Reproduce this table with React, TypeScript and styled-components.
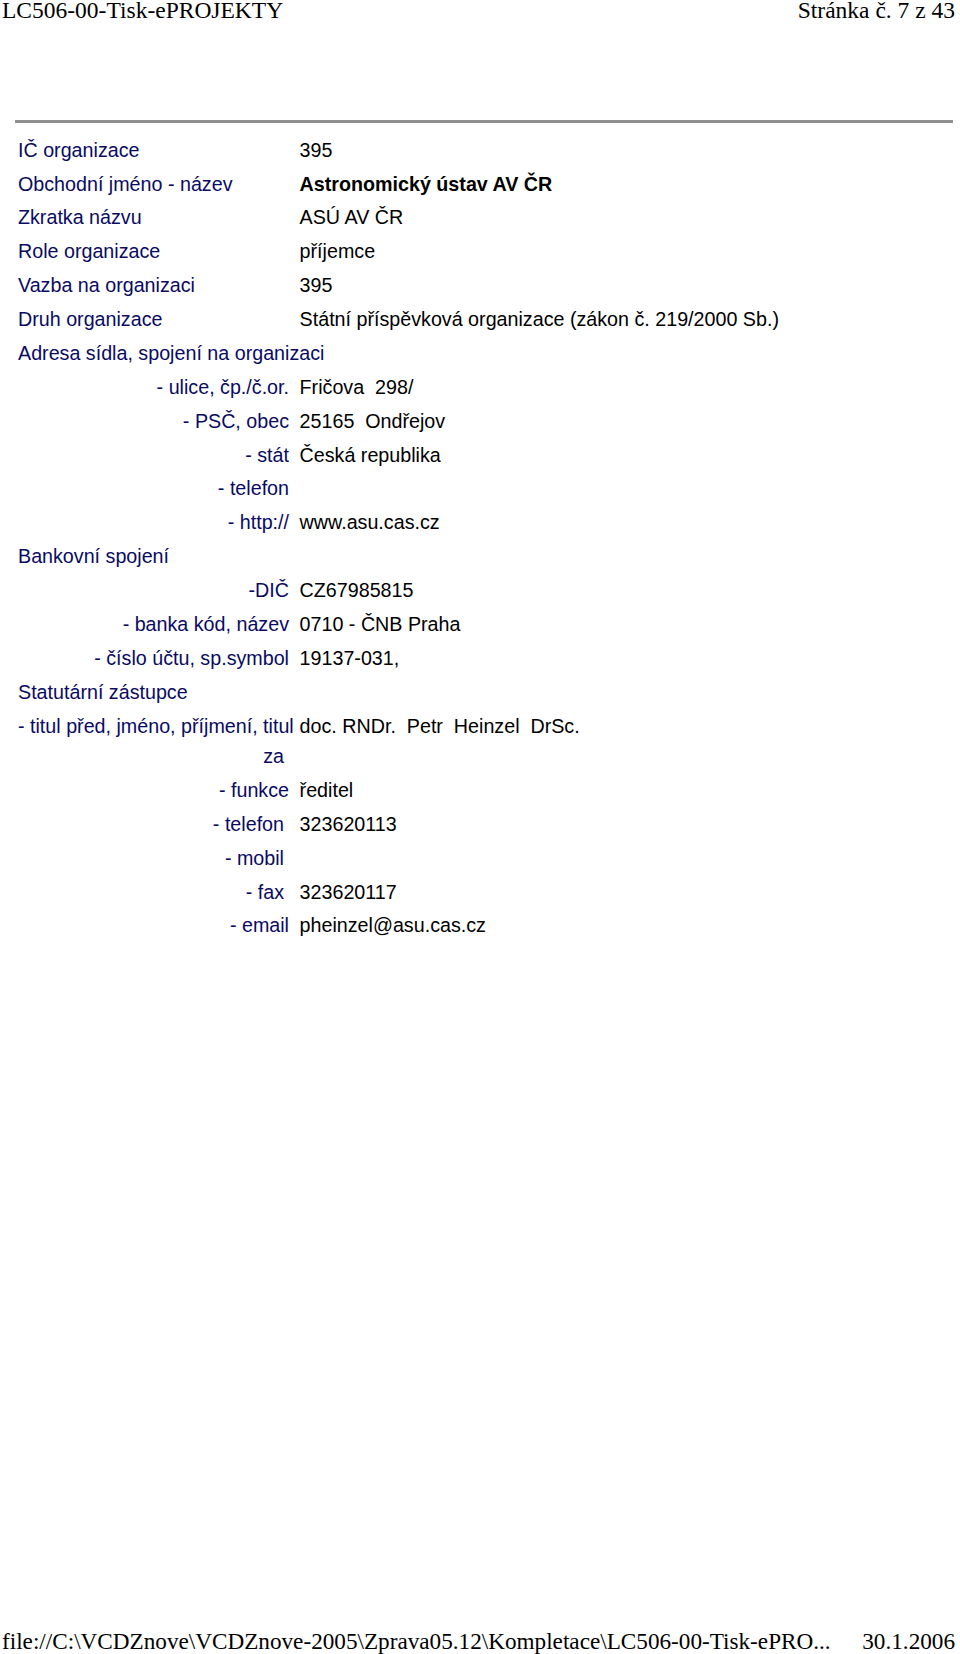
import React from "react";
import styled, { createGlobalStyle } from "styled-components";

const Global = createGlobalStyle`
  html, body { margin: 0; padding: 0; background: #ffffff; }
  #root { width: 960px; }
`;

const Page = styled.div`
  width: 960px;
  height: 1654px;
  display: flex;
  flex-direction: column;
  background: #ffffff;
  color: #000000;
  overflow: hidden;
`;

const PrintBar = styled.div<{ $size?: number }>`
  display: flex;
  justify-content: space-between;
  align-items: baseline;
  padding: 0 5px 0 2px;
  font-family: "Liberation Serif", "Times New Roman", serif;
  font-size: ${(p) => p.$size ?? 23.5}px;
  line-height: 21px;
  color: #000000;
  white-space: nowrap;
`;

const Footer = styled(PrintBar)`
  margin-top: auto;
  margin-bottom: 2px;
`;

const Rule = styled.div`
  margin: 99px 7px 0 15px;
  height: 3px;
  background: #8f8f8f;
`;

const Table = styled.div`
  display: flex;
  flex-direction: column;
  margin-top: 10px;
  padding-left: 18px;
  font-family: "Liberation Sans", Arial, sans-serif;
  font-size: 19.7px;
  line-height: 30.5px;
`;

const Row = styled.div`
  display: grid;
  grid-template-columns: 271px 1fr;
  column-gap: 10.6px;
  padding: 1.7px 0;
  white-space: nowrap;
`;

const Label = styled.div<{ $align?: "left" | "right"; $trail?: boolean; $span?: boolean }>`
  color: #0a0a63;
  text-align: ${(p) => p.$align ?? "left"};
  padding-right: ${(p) => (p.$trail ? "5px" : "0")};
  grid-column: ${(p) => (p.$span ? "1 / span 2" : "auto")};
`;

const LabelLine = styled.div<{ $align?: "left" | "right"; $trail?: boolean }>`
  text-align: ${(p) => p.$align ?? "left"};
  padding-right: ${(p) => (p.$trail ? "5px" : "0")};
`;

const Value = styled.div<{ $bold?: boolean }>`
  color: #000000;
  font-weight: ${(p) => (p.$bold ? 700 : 400)};
  white-space: pre;
`;

type Item =
  | { kind: "field"; label: string; value: string; bold?: boolean }
  | { kind: "sub"; label: string; value: string; trail?: boolean }
  | { kind: "section"; label: string };

const items: Item[] = [
  { kind: "field", label: "IČ organizace", value: "395" },
  { kind: "field", label: "Obchodní jméno - název", value: "Astronomický ústav AV ČR", bold: true },
  { kind: "field", label: "Zkratka názvu", value: "ASÚ AV ČR" },
  { kind: "field", label: "Role organizace", value: "příjemce" },
  { kind: "field", label: "Vazba na organizaci", value: "395" },
  { kind: "field", label: "Druh organizace", value: "Státní příspěvková organizace (zákon č. 219/2000 Sb.)" },
  { kind: "section", label: "Adresa sídla, spojení na organizaci" },
  { kind: "sub", label: "- ulice, čp./č.or.", value: "Fričova  298/" },
  { kind: "sub", label: "- PSČ, obec", value: "25165  Ondřejov" },
  { kind: "sub", label: "- stát", value: "Česká republika" },
  { kind: "sub", label: "- telefon", value: "" },
  { kind: "sub", label: "- http://", value: "www.asu.cas.cz" },
  { kind: "section", label: "Bankovní spojení" },
  { kind: "sub", label: "-DIČ", value: "CZ67985815" },
  { kind: "sub", label: "- banka kód, název", value: "0710 - ČNB Praha" },
  { kind: "sub", label: "- číslo účtu, sp.symbol", value: "19137-031," },
  { kind: "section", label: "Statutární zástupce" },
];

const contacts: { label: string; value: string; trail?: boolean }[] = [
  { label: "- funkce", value: "ředitel" },
  { label: "- telefon", value: "323620113", trail: true },
  { label: "- mobil", value: "", trail: true },
  { label: "- fax", value: "323620117", trail: true },
  { label: "- email", value: "pheinzel@asu.cas.cz" },
];

export default function App() {
  return (
    <>
      <Global />
      <Page>
        <PrintBar>
          <span>LC506-00-Tisk-ePROJEKTY</span>
          <span>Stránka č. 7 z 43</span>
        </PrintBar>
        <Rule />
        <Table>
          {items.map((it, i) => {
            if (it.kind === "section") {
              return (
                <Row key={i}>
                  <Label $span>{it.label}</Label>
                </Row>
              );
            }
            if (it.kind === "field") {
              return (
                <Row key={i}>
                  <Label>{it.label}</Label>
                  <Value $bold={it.bold}>{it.value}</Value>
                </Row>
              );
            }
            return (
              <Row key={i}>
                <Label $align="right" $trail={it.trail}>
                  {it.label}
                </Label>
                <Value>{it.value}</Value>
              </Row>
            );
          })}
          <Row>
            <Label>
              <LabelLine>- titul před, jméno, příjmení, titul</LabelLine>
              <LabelLine $align="right" $trail>
                za
              </LabelLine>
            </Label>
            <Value>{"doc. RNDr.  Petr  Heinzel  DrSc."}</Value>
          </Row>
          {contacts.map((c) => (
            <Row key={c.label}>
              <Label $align="right" $trail={c.trail}>
                {c.label}
              </Label>
              <Value>{c.value}</Value>
            </Row>
          ))}
        </Table>
        <Footer $size={23.2}>
          <span>file://C:\VCDZnove\VCDZnove-2005\Zprava05.12\Kompletace\LC506-00-Tisk-ePRO...</span>
          <span>30.1.2006</span>
        </Footer>
      </Page>
    </>
  );
}
